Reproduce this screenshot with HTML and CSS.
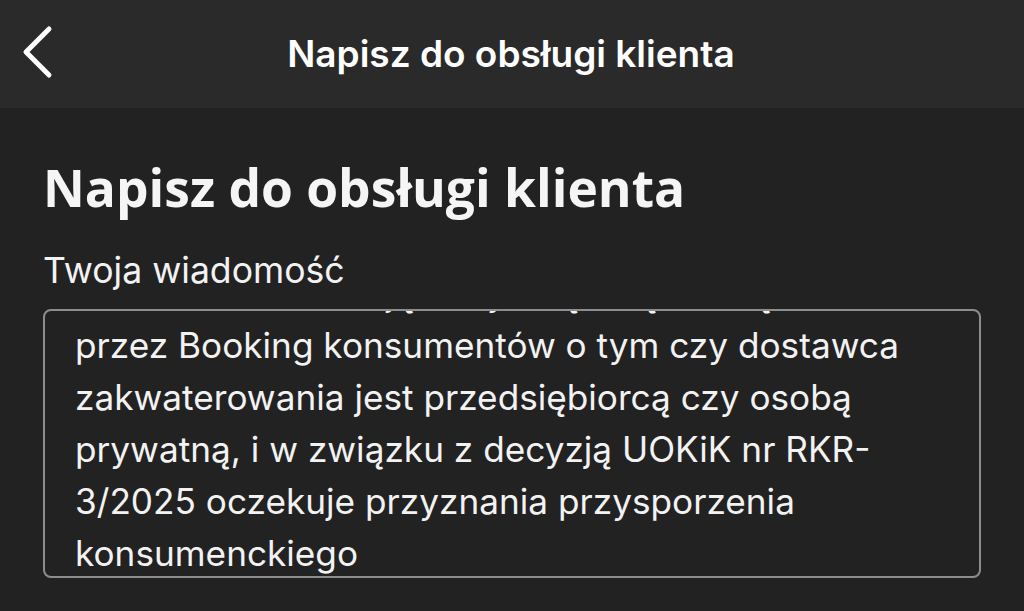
FILE: index.html
```html
<!DOCTYPE html>
<html lang="pl">
<head>
<meta charset="utf-8">
<title>Napisz do obsługi klienta</title>
<link rel="stylesheet" href="styles.css">
</head>
<body>
<header class="topbar">
  <button class="back" aria-label="Wstecz">
    <svg width="40" height="60" viewBox="0 0 40 60"><path d="M27 4 L4 27 L27 50" fill="none" stroke="#fff" stroke-width="5" stroke-linecap="round" stroke-linejoin="round"/></svg>
  </button>
  <h1 class="topbar-title">Napisz do obsługi klienta</h1>
  <span class="spacer"></span>
</header>
<main class="content">
  <h2 class="heading">Napisz do obsługi klienta</h2>
  <label class="label">Twoja wiadomość</label>
  <div class="field">
    <div class="field-text">
      Zaznaczam że ma ją na tym tą całą stroną<br>
      przez Booking konsumentów o tym czy dostawca<br>
      zakwaterowania jest przedsiębiorcą czy osobą<br>
      prywatną, i w związku z decyzją UOKiK nr RKR-<br>
      3/2025 oczekuje przyznania przysporzenia<br>
      konsumenckiego
    </div>
  </div>
</main>
</body>
</html>
```
FILE: styles.css
```css
html, body {
  margin: 0;
  padding: 0;
  background: #222222;
  color: #f2f2f2;
  font-family: "Inter", "Roboto", sans-serif;
}
.topbar {
  height: 108px;
  background: #2a2a2a;
  display: flex;
  align-items: center;
  padding: 0 24px 0 22px;
  box-sizing: border-box;
}
.back {
  background: none;
  border: 0;
  padding: 0;
  width: 40px;
  height: 60px;
  display: flex;
  align-items: center;
  margin-top: 2px;
}
.spacer { width: 40px; }
.topbar-title {
  flex: 1;
  margin: 0;
  text-align: center;
  font-size: 37px;
  line-height: 44px;
  font-weight: 600;
  color: #ffffff;
  white-space: nowrap;
}
.content {
  padding: 47px 43px 0 43px;
}
.heading {
  margin: 0;
  font-family: "Open Sans", sans-serif;
  font-weight: 700;
  font-size: 51.5px;
  line-height: 64px;
  color: #f5f5f5;
  white-space: nowrap;
}
.label {
  display: block;
  margin-top: 32px;
  font-size: 35.6px;
  line-height: 40px;
}
.field {
  margin-top: 18px;
  width: 938px;
  height: 269px;
  box-sizing: border-box;
  border: 2px solid #8d8d8d;
  border-radius: 8px;
  overflow: hidden;
  padding: 0 20px 0 30px;
}
.field-text {
  margin-top: -44px;
  font-size: 35.2px;
  line-height: 52px;
  color: #f2f2f2;
  white-space: nowrap;
}
```
